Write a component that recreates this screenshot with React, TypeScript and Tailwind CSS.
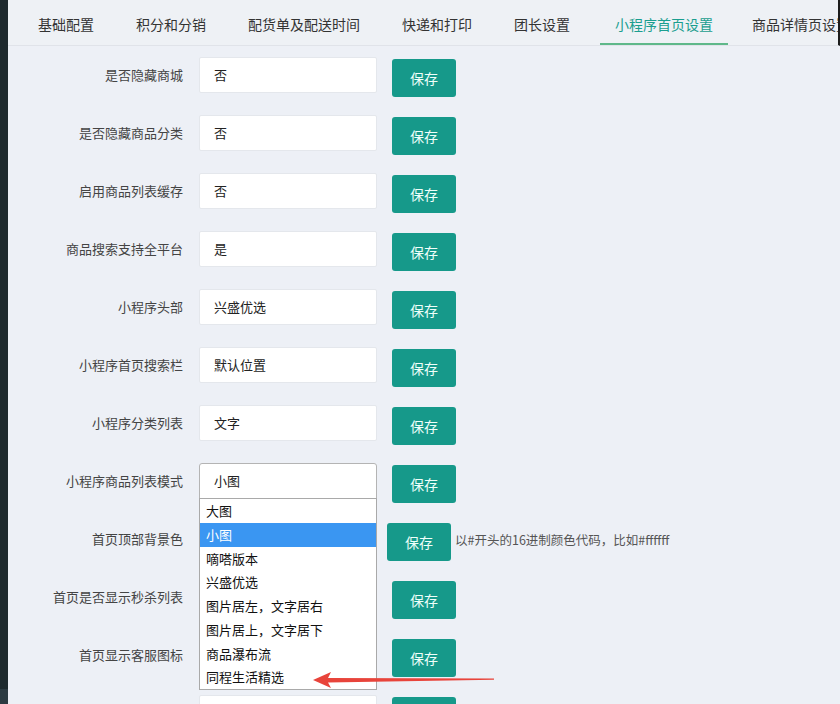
import React from 'react'

const tabs = ['基础配置', '积分和分销', '配货单及配送时间', '快递和打印', '团长设置', '小程序首页设置', '商品详情页设置']

const options = ['大图', '小图', '嘀嗒版本', '兴盛优选', '图片居左，文字居右', '图片居上，文字居下', '商品瀑布流', '同程生活精选']

interface Row {
  label: string
  value: string
  open?: boolean
  hint?: string
}

const rows: Row[] = [
  { label: '是否隐藏商城', value: '否' },
  { label: '是否隐藏商品分类', value: '否' },
  { label: '启用商品列表缓存', value: '否' },
  { label: '商品搜索支持全平台', value: '是' },
  { label: '小程序头部', value: '兴盛优选' },
  { label: '小程序首页搜索栏', value: '默认位置' },
  { label: '小程序分类列表', value: '文字' },
  { label: '小程序商品列表模式', value: '小图', open: true },
  { label: '首页顶部背景色', value: '', hint: '以#开头的16进制颜色代码，比如#ffffff' },
  { label: '首页是否显示秒杀列表', value: '否' },
  { label: '首页显示客服图标', value: '否' },
  { label: '首页显示公告', value: '否' },
]

function SelectDropdown() {
  return (
    <div className="absolute -left-px -right-px top-full z-10 border border-[#a9a9a9] bg-white">
      {options.map((o, i) => (
        <div
          key={o}
          className={`h-[23.75px] px-[6px] text-[13px] leading-[23.75px] whitespace-nowrap ${
            i === 1 ? 'bg-[#3a96f2] text-white' : 'text-[#111]'
          }`}
        >
          {o}
        </div>
      ))}
    </div>
  )
}

function SettingRow({ row }: { row: Row }) {
  return (
    <div className="flex h-[58px] items-start">
      <div className="h-[36px] w-[175px] text-right text-[13px] leading-[36px] text-[#444]">{row.label}</div>
      <div
        className={`relative ml-[16px] h-[36px] w-[178px] bg-white pl-[14px] text-[13px] leading-[34px] text-[#222] ${
          row.open ? 'rounded-t-[3px] border border-[#b4b4b4]' : 'rounded-[2px] border border-[#e4e7ec]'
        } ${row.hint ? 'invisible' : ''}`}
      >
        {row.value}
        {row.open && <SelectDropdown />}
      </div>
      <button
        className={`mt-[2px] h-[38px] w-[64px] shrink-0 rounded-[3px] bg-[#16998a] text-[14px] text-[#effffa] ${
          row.hint ? 'ml-[10px]' : 'ml-[15px]'
        }`}
      >
        保存
      </button>
      {row.hint && (
        <div className="ml-[4px] mt-[2px] text-[12.5px] leading-[34px] whitespace-nowrap text-[#555]">{row.hint}</div>
      )}
    </div>
  )
}

export default function App() {
  return (
    <div className="flex h-[704px] w-[840px] overflow-hidden bg-[#edf0f6] font-['Noto_Sans_CJK_SC',sans-serif]">
      {/* dark sidebar edge */}
      <div className="flex w-[8px] shrink-0 flex-col">
        <div className="flex-1 bg-[#1e2a2e]" />
        <div className="h-[15px] bg-[#2c3b42]" />
      </div>

      <div className="relative flex min-w-0 flex-1 flex-col">
        {/* Tabs */}
        <div className="flex h-[46px] shrink-0 overflow-hidden border-b border-r-2 border-b-[#e0e3e9] border-r-[#1c1c1c] bg-[#eef1f5] pl-[9px]">
          {tabs.map((t, i) => (
            <div
              key={t}
              className={`flex h-full shrink-0 items-center border-b-2 px-[15px] pt-[6px] text-[14px] whitespace-nowrap ${
                i === 5 ? 'border-[#5fb88a] text-[#1a9e8f]' : 'border-transparent text-[#333]'
              } ${i === 5 ? 'ml-[9px] mr-[3px]' : 'mx-[6px]'}`}
            >
              {t}
            </div>
          ))}
        </div>

        {/* Settings form */}
        <div className="pt-[11px]">
          {rows.map((r) => (
            <SettingRow key={r.label} row={r} />
          ))}
        </div>

        {/* red annotation arrow */}
        <svg className="absolute left-[300px] top-[668px] z-20" width="190" height="24" viewBox="0 0 190 24">
          <polygon
            points="5,12 23,4 20,10 186,10.6 186,11.8 20,14.6 23,20"
            fill="#e8443b"
          />
        </svg>
      </div>
    </div>
  )
}
